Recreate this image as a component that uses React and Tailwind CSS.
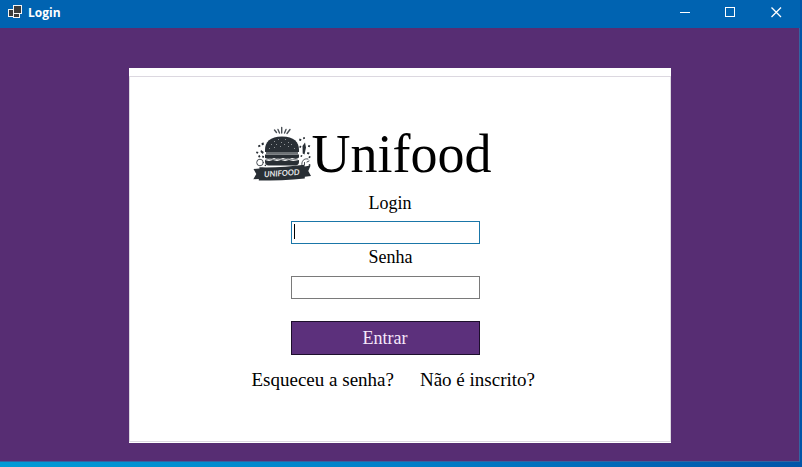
function AppIcon() {
  return (
    <svg width="16" height="16" viewBox="0 0 16 16" aria-hidden="true" shapeRendering="crispEdges">
      <g fill="#3b3b3b" stroke="#f4f4f4" strokeWidth="1">
        <rect x="0.5" y="5.5" width="7" height="7" />
        <rect x="5.5" y="9.5" width="6" height="4" />
        <rect x="5.5" y="1.5" width="8" height="8" />
      </g>
    </svg>
  );
}

function BurgerLogo() {
  return (
    <svg width="60" height="56" viewBox="0 0 60 56" role="img" aria-label="Unifood logo" className="shrink-0">
      <g stroke="#4a5056" strokeWidth="1.4" strokeLinecap="round" fill="none">
        <path d="M22.500 4l2 2.500M26 3.500l1.500 3.500M29.700 1.500v5.500M34 3.500l-1.500 3.500M38 3.500l-3 4" />
        <circle cx="8" cy="36.500" r="3.300" strokeWidth="1" />
        <path d="M50 40c-1-5 2-8 6-7M52.500 39v-2.500M55 36l2-1" strokeWidth="1" />
      </g>
      <g fill="#292f35">
        <path d="M13 24c0-8 5-13.500 17-13.500s17 5.500 17 13.500v2h-34z" />
        <path d="M13 28.500h34v3l-3 1.500-4-1-4 1.500-5-1.500-5 1.500-4-1.500-4 1.500-5-1.500z" />
        <path d="M13 34l4 1 4-1 4 1 4-1 4 1 4-1 4 1 6-1v2c0 2-1.500 3.500-3.500 3.500h-27c-2 0-3.500-1.500-3.500-3.500z" />
        <path d="M50.500 20l2.500-3.500 1 5-1.500 7-1.800-1z" />
        <path d="M6 19.500l2-.8.5 1.800-2 .7zM9.500 17l2.200-.5v2.400l-1.800.3zM4.500 25.500l2 .5-.8 1.700-1.700-.6zM9 24l2.800 2-1 2-2.300-1.900zM6 30l1.700-1 .8 1.700-1.500 1zM10.500 29.500l1.700.8-.6 1.700-1.700-.7zM13 38.500l1.300.4-.6 1.300-1.200-.5zM47.500 12.500l2 .7-.6 1.900-1.900-.7zM51 11.500l1.700-.6.3 1.900-1.700.5zM48 19.500l1.500 1-1 1.500-1.400-.8zM56.500 19l1.800.5-.7 1.700-1.700-.5zM55.500 26l2.200.7-1 1.800-1.800-.7zM49 29l1.500.6-.7 1.500-1.500-.6zM57 30l1.700.6-.7 1.600-1.500-.5zM57 38l1.500.5-.6 1.500-1.400-.5z" />
        <path d="M1.500 43l6-.5-.2-1.200c15 .4 31-.7 45-2.600l.3 1.700 6-.8-2.300 5.500 2.700 5-6.200.6v1.700c-15 1.500-31 2.200-46 2.200v-1.600l-5.500.2 3-5.200z" />
      </g>
      <path d="M14 26h32v2.500h-32z" fill="#6d7276" />
      <path d="M13.500 33.500l4.500-.8 4 1 4-1 5 1 5-1 4 1 6-.7" stroke="#8b8f93" strokeWidth="1" fill="none" />
      <g fill="#8f9396">
        <path d="M19 18h1v1h-1zM22 15h1v1h-1zM26 13h1v1h-1zM24 18h1v1h-1zM29 16h1v1h-1zM33 13h1v1h-1zM32 18h1v1h-1zM36 16h1v1h-1zM39 18h1v1h-1zM28 20h1v1h-1zM36 20h1v1h-1zM17 22h1v1h-1zM22 21h1v1h-1zM42 22h1v1h-1z" />
      </g>
      <text
        x="30"
        y="50"
        textAnchor="middle"
        transform="rotate(-4 30 50)"
        fill="#e4e6e8"
        className="font-['Lato',sans-serif] text-[8px] font-bold italic"
      >
        UNIFOOD
      </text>
    </svg>
  );
}

function TitleBar() {
  return (
    <header className="flex h-7 items-center justify-between bg-[#0063b1] pl-2 pr-px text-white">
      <div className="flex items-center gap-1 pb-1">
        <AppIcon />
        <h1 className="pt-[2px] font-['Open_Sans',sans-serif] text-xs font-bold leading-4">Login</h1>
      </div>
      <div className="flex h-full pb-1">
        <button type="button" aria-label="Minimizar" className="grid w-[46px] place-items-center">
          <svg width="11" height="11" viewBox="0 0 11 11" stroke="currentColor" shapeRendering="crispEdges">
            <path d="M1 5.500h10" />
          </svg>
        </button>
        <button type="button" aria-label="Maximizar" className="grid w-[46px] place-items-center">
          <svg width="11" height="11" viewBox="0 0 11 11" stroke="currentColor" fill="none" shapeRendering="crispEdges">
            <rect x="0.5" y="0.5" width="9" height="9" />
          </svg>
        </button>
        <button type="button" aria-label="Fechar" className="grid w-[46px] place-items-center">
          <svg width="11" height="11" viewBox="0 0 11 11" stroke="currentColor" strokeWidth="1.3">
            <path d="M0.500 0.500l9.500 9.500M10 0.500l-9.500 9.500" />
          </svg>
        </button>
      </div>
    </header>
  );
}

export default function App() {
  return (
    <div className="flex min-h-screen flex-col bg-linear-to-r from-[#009bd6] via-[#007fc8] to-[#0055a8] pb-[5px] pr-[2px]">
      <div className="flex flex-1 flex-col border-b border-[#3463a0] bg-[#572d73]">
        <TitleBar />
        <main className="flex flex-1 justify-center border-r border-[#3463a0] pb-[18px] pt-10 font-['Liberation_Serif',serif] text-black">
          <div className="flex w-full max-w-[542px] flex-col bg-white pb-px pt-2">
            <form
              className="flex flex-1 flex-col border border-[#dcd8e0] pl-[122px] pt-[49px]"
              onSubmit={(e) => e.preventDefault()}
            >
              <div className="flex h-14 items-center">
                <BurgerLogo />
                <h2 className="text-[54px] leading-[56px]">Unifood</h2>
              </div>
              <div className="flex w-[228px] flex-col pl-[39px] pt-[9px]">
                <label htmlFor="login" className="pl-[78px] text-lg leading-6">
                  Login
                </label>
                <div className="relative mt-[6px] flex">
                  <input
                    id="login"
                    type="text"
                    className="h-[23px] w-full border border-[#1a76a8] bg-white px-[2px] text-base caret-transparent outline-none"
                  />
                  <span aria-hidden="true" className="absolute left-[3px] top-[3px] h-[15px] w-px bg-black" />
                </div>
                <label htmlFor="senha" className="mt-px pl-[78px] text-lg leading-6">
                  Senha
                </label>
                <input
                  id="senha"
                  type="password"
                  className="mt-[7px] h-[23px] border border-[#7a7a7a] bg-white px-[2px] text-base outline-none"
                />
                <button
                  type="submit"
                  className="mt-[22px] h-[34px] border border-[#1d0f2c] bg-[#5c307c] text-lg leading-6 text-[#f6e8fa]"
                >
                  Entrar
                </button>
              </div>
              <nav className="flex gap-[26px] pt-[13px] text-[19px] leading-6">
                <a href="#recuperar">Esqueceu a senha?</a>
                <a href="#cadastro">Não é inscrito?</a>
              </nav>
            </form>
          </div>
        </main>
      </div>
    </div>
  );
}
